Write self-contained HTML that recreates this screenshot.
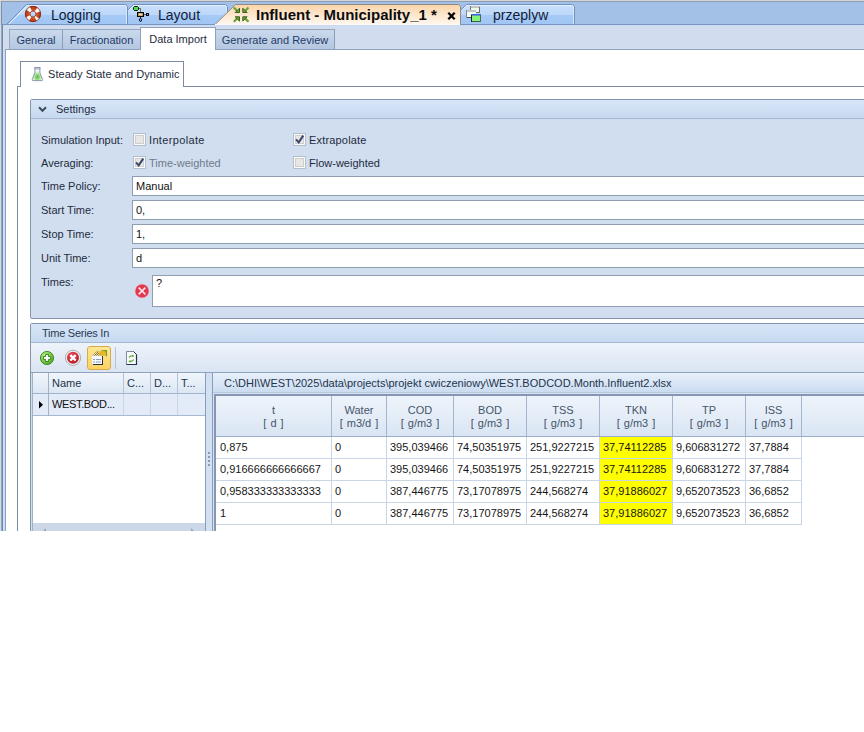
<!DOCTYPE html>
<html><head><meta charset="utf-8">
<style>
*{box-sizing:border-box;margin:0;padding:0}
html,body{width:864px;height:732px;overflow:hidden;background:#fff;font-family:"Liberation Sans",sans-serif;font-size:11px;color:#1e1e1e}
.a{position:absolute;white-space:nowrap}
#app{position:absolute;left:0;top:0;width:864px;height:531px;overflow:hidden;background:#d6e2f2}
.tt{font-size:14px;color:#101c38;top:7px;line-height:17px}
.sub{top:29px;height:20px;border-top:1px solid #95a6bd;border-right:1px solid #8b9eb8;background:linear-gradient(#cad9ec,#b4c7e0);color:#1f3a66;line-height:21px;text-align:center}
.lbl{color:#1e2c40;line-height:13px}
.inp{left:132px;width:740px;height:20px;background:#fff;border:1px solid #8e9db2;padding:0 0 0 3px;color:#111;line-height:19px}
.cb{width:13px;height:13px;border:1px solid #b3bfcf;background:#e8e7e5;box-shadow:inset 0 0 0 1px #fbfbfb,inset 0 0 0 2px #cfcfcf}
.gl{color:#4a5b70}
.gh{color:#44556a;text-align:center;line-height:14px;word-spacing:1px}
.gc{color:#161616;line-height:13px}
</style></head><body>
<div id="app">
  <!-- top document tab strip -->
  <svg class="a" style="left:0;top:0" width="864" height="25" viewBox="0 0 864 25">
    <defs>
      <linearGradient id="gb" x1="0" y1="0" x2="0" y2="1">
        <stop offset="0" stop-color="#c9e0fc"/><stop offset="0.54" stop-color="#bcd7f9"/>
        <stop offset="0.54" stop-color="#a6caf6"/><stop offset="1" stop-color="#a2c6f4"/>
      </linearGradient>
      <linearGradient id="go" x1="0" y1="0" x2="0" y2="1">
        <stop offset="0" stop-color="#fbd4a8"/><stop offset="0.5" stop-color="#fde6cc"/>
        <stop offset="1" stop-color="#fff8f0"/>
      </linearGradient>
    </defs>
    <rect x="0" y="0" width="864" height="25" fill="#a3c1e6"/>
    <rect x="0" y="0" width="864" height="1" fill="#d5d5d5"/>
    <rect x="0" y="1" width="864" height="1" fill="#8d9db4"/>
    <!-- Logging -->
    <path d="M6.5 24.5 L26.5 4.5 L125.5 4.5 L127.5 6.5 L127.5 24.5" fill="url(#gb)" stroke="#7190bf" stroke-width="1"/>
    <path d="M8 24 L27 5 L125 5" fill="none" stroke="#e2effd" stroke-width="1" transform="translate(0.5,0.5)"/>
    <rect x="126" y="6" width="1" height="18" fill="#d8ebfd"/>
    <!-- Layout -->
    <path d="M127.5 24.5 L127.5 10.5 L133.5 4.5 L225.5 4.5 L227.5 6.5 L227.5 24.5" fill="url(#gb)" stroke="#7190bf" stroke-width="1"/>
    <path d="M128.5 10.5 L133.5 5.5 L225.5 5.5" fill="none" stroke="#e2effd" stroke-width="1"/>
    <rect x="226" y="6" width="1" height="18" fill="#d8ebfd"/>
    <!-- przeplyw -->
    <path d="M460.5 24.5 L460.5 10.5 L466.5 4.5 L572.5 4.5 L574.5 6.5 L574.5 24.5" fill="url(#gb)" stroke="#7190bf" stroke-width="1"/>
    <path d="M461.5 10.5 L466.5 5.5 L572.5 5.5" fill="none" stroke="#e2effd" stroke-width="1"/>
    <rect x="573" y="6" width="1" height="18" fill="#d8ebfd"/>
    <!-- bottom line -->
    <rect x="0" y="24" width="864" height="1" fill="#7a96be"/>
    <!-- Influent active -->
    <path d="M214.5 25 L235.5 4.5 L458.5 4.5 L460.5 6.5 L460.5 25" fill="url(#go)" stroke="#8f8a84" stroke-width="1"/>
    <rect x="215" y="24" width="245" height="1" fill="#fff8f0"/>
    <rect x="0" y="0" width="1" height="25" fill="#d5d5d5"/>
    <rect x="1" y="1" width="1" height="24" fill="#7890b0"/>
    <!-- lifebuoy icon -->
    <g transform="translate(33,14)">
      <defs><radialGradient id="lb" r="0.5" cx="0.5" cy="0.5" gradientUnits="objectBoundingBox"><stop offset="0.35" stop-color="#a8300e"/><stop offset="0.7" stop-color="#e4622e"/><stop offset="1" stop-color="#a02a0c"/></radialGradient></defs>
      <circle r="5.4" fill="none" stroke="url(#lb)" stroke-width="5"/>
      <circle r="5.4" fill="none" stroke="#d8582a" stroke-width="3" opacity="0.6"/>
      <circle r="5.4" fill="none" stroke="#fff" stroke-width="5" stroke-dasharray="3.4 5.08" stroke-dashoffset="1.7" transform="rotate(45)"/>
      <circle r="7.7" fill="none" stroke="#8a2810" stroke-width="0.9" opacity="0.85"/>
      <circle r="3" fill="none" stroke="#8a2810" stroke-width="0.8" opacity="0.85"/>
    </g>
    <!-- layout icon -->
    <g>
      <path d="M138.5 8.5 H140.5 V12" fill="none" stroke="#6a6448" stroke-width="1"/>
      <path d="M134.5 6.5 H137.5 L138.5 7.5 V9.5 L137.5 10.5 H134.5 L133.5 9.5 V7.5 Z" fill="#46e046" stroke="#111" stroke-width="1"/>
      <rect x="137.6" y="12.6" width="5.8" height="3.8" fill="#fcd89a" stroke="#000" stroke-width="1.2"/>
      <rect x="144" y="14" width="2" height="1" fill="#6a6448"/>
      <rect x="146" y="13" width="3" height="3" fill="#0a0a1a"/>
      <rect x="147" y="14" width="1" height="1" fill="#9aa"/>
      <rect x="140" y="17" width="1" height="1" fill="#222"/>
      <path d="M140.5 18 L141.8 19.9 L140.5 21.8 L139.2 19.9 Z" fill="#9ab8e8" stroke="#0a0a1a" stroke-width="1"/>
    </g>
    <!-- influent icon: 4 green arrows -->
    <g id="arr">
      <path d="M233.8 7.5 L238 11.7" stroke="#6aa23a" stroke-width="2.2"/>
      <path d="M239.5 8.2 L239.5 12.5 L235.2 12.5 Z" fill="#69a83c" stroke="#3e5e1c" stroke-width="1" stroke-linejoin="miter"/>
    </g>
    <use href="#arr" transform="translate(482.3,0) scale(-1,1)"/>
    <use href="#arr" transform="translate(0,29.3) scale(1,-1)"/>
    <use href="#arr" transform="translate(482.3,29.3) scale(-1,-1)"/>
    <!-- close x -->
    <path d="M448.3 12.8 L454.7 19.2 M454.7 12.8 L448.3 19.2" stroke="#000" stroke-width="2.3"/>
    <!-- przeplyw icon -->
    <g>
      <rect x="470" y="6" width="10" height="7" fill="#eefcee"/>
      <rect x="470" y="6" width="10" height="2" fill="#c4c4c4"/>
      <rect x="470" y="6" width="1" height="7" fill="#7a7a7a"/><rect x="479" y="7" width="1" height="6" fill="#6a6a6a"/><rect x="471" y="12" width="9" height="1" fill="#6a6a6a"/>
      <rect x="466" y="10" width="10" height="8" fill="#f2fff2"/>
      <rect x="466" y="10" width="10" height="2" fill="#c4c4c4"/>
      <rect x="466" y="10" width="1" height="8" fill="#8a8a8a"/><rect x="467" y="17" width="5" height="1" fill="#4a4a4a"/>
      <rect x="471" y="14" width="10" height="8" fill="#82f47a"/>
      <rect x="471" y="14" width="10" height="1.6" fill="#3d6ad8"/>
      <rect x="471" y="15" width="1" height="7" fill="#1a2a3a"/><rect x="472" y="21" width="9" height="1" fill="#4a5a4a"/><rect x="480" y="15" width="1" height="7" fill="#5a6a5a"/>
    </g>
  </svg>
  <div class="a tt" style="left:51px">Logging</div>
  <div class="a tt" style="left:158px">Layout</div>
  <div class="a tt" style="left:256px;top:6px;font-size:15px;font-weight:bold;color:#0c0c0c">Influent - Municipality_1 *</div>
  <div class="a tt" style="left:493px">przeplyw</div>

  <!-- frame below strip -->
  <div class="a" style="left:0;top:25px;width:1px;height:506px;background:#d0dcea"></div>
  <div class="a" style="left:1px;top:25px;width:1px;height:506px;background:#95a7bf"></div>
  <div class="a" style="left:2px;top:25px;width:1px;height:506px;background:#7189aa"></div>
  <div class="a" style="left:3px;top:25px;width:861px;height:506px;background:#d1ddee"></div>
  <div class="a" style="left:3px;top:25px;width:861px;height:1px;background:#c9dcf5"></div>
  <div class="a" style="left:3px;top:50px;width:2px;height:481px;background:#c9defa"></div>
  <!-- sub tab strip -->
  <div class="a" style="left:5px;top:49px;width:859px;height:1px;background:#8ea2bd"></div>
  <div class="a sub" style="left:9px;width:54px;border-left:1px solid #95a6bd">General</div>
  <div class="a sub" style="left:63px;width:78px">Fractionation</div>
  <div class="a sub" style="left:216px;width:119px">Generate and Review</div>
  <div class="a" style="left:140px;top:27px;width:76px;height:24px;background:#fff;border:1px solid #8ea2bd;border-bottom:none;color:#1e2c40;line-height:16px;padding-top:3px;text-align:center">Data Import</div>

  <!-- content white area -->
  <div class="a" style="left:5px;top:50px;width:859px;height:481px;background:#fff;border-left:1px solid #8ea2bd"></div>

  <!-- inner tab -->
  <div class="a" style="left:17px;top:86px;width:847px;height:445px;border-left:1px solid #7d8ba3;border-top:1px solid #7d8ba3"></div>
  <div class="a" style="left:20px;top:61px;width:164px;height:26px;background:#fff;border:1px solid #7d8ba3;border-bottom:none"></div>
  <svg class="a" style="left:31px;top:66px" width="14" height="17" viewBox="0 0 14 17">
    <defs><radialGradient id="fl" cx="0.5" cy="0.72" r="0.5"><stop offset="0" stop-color="#52b840"/><stop offset="0.55" stop-color="#b4e4a0"/><stop offset="1" stop-color="#eef8ee"/></radialGradient></defs>
    <g transform="translate(-0.6,0)">
    <path d="M4.5 1.5 L9.5 1.5 L9.5 6.5 L12.2 13.6 Q12.5 14.6 11.5 14.6 L2.5 14.6 Q1.5 14.6 1.8 13.6 L4.5 6.5 Z" fill="url(#fl)" stroke="#7f8fa6" stroke-width="0.9"/>
    <path d="M5.4 2.6 L8.6 2.6 L8.6 6.5 L5.4 6.5 Z" fill="#eef4fa" opacity="0.7"/>
    <rect x="4.5" y="1.5" width="5" height="1.4" fill="#fff" stroke="#7f8fa6" stroke-width="0.8"/>
    </g>
  </svg>
  <div class="a" style="left:48px;top:68px;color:#1e2c40;line-height:13px;letter-spacing:0.05px">Steady State and Dynamic</div>

  <!-- Settings group -->
  <div class="a" style="left:30px;top:99px;width:850px;height:220px;background:#d1deef;border:1px solid #8596ae;border-radius:2px"></div>
  <div class="a" style="left:31px;top:100px;width:849px;height:18px;background:linear-gradient(#d8e6f8,#c6d9f0)"></div>
  <div class="a" style="left:31px;top:118px;width:849px;height:1px;background:#a6b8d0"></div>
  <svg class="a" style="left:38px;top:106px" width="9" height="7" viewBox="0 0 9 7"><path d="M1 1.3 L4.5 4.8 L8 1.3" fill="none" stroke="#3e4c60" stroke-width="2"/></svg>
  <div class="a lbl" style="left:56px;top:103px">Settings</div>

  <div class="a lbl" style="left:41px;top:134px">Simulation Input:</div>
  <div class="a cb" style="left:133px;top:133px"></div>
  <div class="a lbl" style="left:149px;top:134px;letter-spacing:0.35px">Interpolate</div>
  <div class="a cb" style="left:293px;top:133px"></div>
  <svg class="a" style="left:293px;top:133px" width="13" height="13"><path d="M3 6.3 L5.7 9.3 L10.2 2.6" fill="none" stroke="#36476a" stroke-width="2"/></svg>
  <div class="a lbl" style="left:309px;top:134px;letter-spacing:0.18px">Extrapolate</div>

  <div class="a lbl" style="left:41px;top:157px">Averaging:</div>
  <div class="a cb" style="left:133px;top:156px"></div>
  <svg class="a" style="left:133px;top:156px" width="13" height="13"><path d="M3 6.3 L5.7 9.3 L10.2 2.6" fill="none" stroke="#36476a" stroke-width="2"/></svg>
  <div class="a lbl" style="left:149px;top:157px;color:#6e7a8a">Time-weighted</div>
  <div class="a cb" style="left:293px;top:156px"></div>
  <div class="a lbl" style="left:309px;top:157px">Flow-weighted</div>

  <div class="a lbl" style="left:41px;top:180px">Time Policy:</div>
  <div class="a inp" style="top:176px">Manual</div>
  <div class="a lbl" style="left:41px;top:204px">Start Time:</div>
  <div class="a inp" style="top:200px">0,</div>
  <div class="a lbl" style="left:41px;top:228px">Stop Time:</div>
  <div class="a inp" style="top:224px">1,</div>
  <div class="a lbl" style="left:41px;top:252px">Unit Time:</div>
  <div class="a inp" style="top:248px">d</div>
  <div class="a lbl" style="left:41px;top:276px">Times:</div>
  <svg class="a" style="left:134px;top:283px" width="16" height="16" viewBox="0 0 16 16"><circle cx="8" cy="8" r="7.2" fill="#f2a8b8"/><circle cx="8" cy="8" r="6.6" fill="#e03a50"/><path d="M4.6 4.6 L11.4 11.4 M11.4 4.6 L4.6 11.4" stroke="#ffe4ec" stroke-width="1.5"/></svg>
  <div class="a inp" style="left:152px;top:275px;height:32px;padding-left:3px;line-height:15px">?</div>

  <!-- Time Series In group -->
  <div class="a" style="left:30px;top:323px;width:850px;height:220px;background:#d1deef;border:1px solid #8596ae;border-radius:2px"></div>
  <div class="a" style="left:31px;top:324px;width:849px;height:18px;background:linear-gradient(#d8e6f8,#c6d9f0)"></div>
  <div class="a" style="left:31px;top:342px;width:849px;height:1px;background:#a6b8d0"></div>
  <div class="a lbl" style="left:42px;top:327px;color:#2a3a52;letter-spacing:-0.25px">Time Series In</div>

  <!-- toolbar -->
  <div class="a" style="left:31px;top:343px;width:849px;height:29px;background:linear-gradient(#eef3fa,#d9e4f2)"></div>
  <div class="a" style="left:31px;top:372px;width:849px;height:1px;background:#8fa3bd"></div>
  <svg class="a" style="left:38px;top:349px" width="18" height="18" viewBox="0 0 18 18">
    <defs><radialGradient id="gg" cx="0.35" cy="0.3" r="0.8"><stop offset="0" stop-color="#b4f088"/><stop offset="1" stop-color="#48a81e"/></radialGradient>
    <radialGradient id="rg" cx="0.4" cy="0.3" r="0.8"><stop offset="0" stop-color="#e8505a"/><stop offset="1" stop-color="#b0141c"/></radialGradient></defs>
    <circle cx="9" cy="9" r="6.6" fill="url(#gg)" stroke="#3a8418" stroke-width="0.9"/>
    <path d="M7.6 5.4 H10.4 V7.6 H12.6 V10.4 H10.4 V12.6 H7.6 V10.4 H5.4 V7.6 H7.6 Z" fill="#fff" stroke="#2f7a12" stroke-width="0.9"/>
  </svg>
  <svg class="a" style="left:64px;top:349px" width="18" height="18" viewBox="0 0 18 18">
    <circle cx="9" cy="8.8" r="7.6" fill="#f4f4f4" stroke="#9a9a9a" stroke-width="0.8"/>
    <circle cx="9" cy="8.8" r="6" fill="url(#rg)"/>
    <path d="M6.3 6.1 L11.7 11.5 M11.7 6.1 L6.3 11.5" stroke="#fff" stroke-width="2.3"/>
  </svg>
  <div class="a" style="left:87px;top:346px;width:24px;height:24px;background:linear-gradient(#fde796,#fbd362);border:1px solid #d9aa4c;border-radius:3px"></div>
  <svg class="a" style="left:88px;top:347px" width="22" height="22" viewBox="0 0 22 22">
    <defs><pattern id="ck" width="2" height="2" patternUnits="userSpaceOnUse"><rect width="2" height="2" fill="#f4e4b0"/><rect width="1" height="1" fill="#8a6a20"/><rect x="1" y="1" width="1" height="1" fill="#8a6a20"/></pattern></defs>
    <rect x="5" y="9" width="10" height="9" fill="#2e3444"/>
    <rect x="4" y="8" width="10" height="9" fill="#f6f8fc"/>
    <rect x="4" y="8" width="10" height="0.8" fill="#b8c0cc"/>
    <rect x="5" y="12" width="2" height="1" fill="#8aa0c8"/><rect x="8" y="12" width="5" height="1" fill="#8aa0c8"/>
    <rect x="5" y="14.5" width="2" height="1" fill="#8aa0c8"/><rect x="8" y="14.5" width="5" height="1" fill="#8aa0c8"/>
    <path d="M4.5 8.5 L9.5 3.5 L13.5 7.5 L13.5 8.5 Z" fill="url(#ck)"/>
    <path d="M13 3 L19 3 L19 10 Z" fill="#6e9e3a"/>
    <ellipse cx="14.5" cy="6.2" rx="3.6" ry="2.6" fill="#e8b62c"/>
  </svg>
  <div class="a" style="left:115px;top:347px;width:1px;height:22px;background:#b6c3d4"></div>
  <svg class="a" style="left:125px;top:350px" width="14" height="16" viewBox="0 0 14 16">
    <path d="M1.5 1.5 L8.5 1.5 L11.5 4.5 L11.5 14.5 L1.5 14.5 Z" fill="#f8fafc" stroke="#7d8aa0" stroke-width="1"/>
    <path d="M11.5 4.5 L11.5 14.5 L1.5 14.5" fill="none" stroke="#26324c" stroke-width="1.2"/>
    <path d="M8.5 1.5 L11.5 4.5" fill="none" stroke="#26324c" stroke-width="1"/>
    <path d="M4 7.6 Q5 5.4 8 5.8 M8.6 9.4 Q7.6 11.8 4.6 11.4" fill="none" stroke="#5aa82a" stroke-width="1.2"/>
    <path d="M7.2 4.4 L9.2 5.9 L7.2 7.2 Z M5.4 10.1 L3.4 11.4 L5.4 12.8 Z" fill="#5aa82a"/>
  </svg>

  
  <!-- left grid -->
  <div class="a" style="left:32px;top:373px;width:174px;height:160px;background:#fff;border-left:1px solid #9fb2ca;border-right:1px solid #8a9db8"></div>
  <div class="a" style="left:33px;top:373px;width:172px;height:21px;background:linear-gradient(#f0f5fb,#dce7f4);border-bottom:1px solid #a2b4cc"></div>
  <div class="a" style="left:33px;top:394px;width:172px;height:22px;background:#e2ebf7;border-bottom:1px solid #a8b9cf"></div>
  <div class="a" style="left:48px;top:373px;width:1px;height:43px;background:#9fb2ca"></div>
  <div class="a" style="left:123px;top:373px;width:1px;height:20px;background:#b4c4d8"></div>
  <div class="a" style="left:150px;top:373px;width:1px;height:20px;background:#b4c4d8"></div>
  <div class="a" style="left:177px;top:373px;width:1px;height:20px;background:#b4c4d8"></div>
  <div class="a" style="left:123px;top:394px;width:1px;height:21px;background:#c8d6e6"></div>
  <div class="a" style="left:150px;top:394px;width:1px;height:21px;background:#c8d6e6"></div>
  <div class="a" style="left:177px;top:394px;width:1px;height:21px;background:#c8d6e6"></div>
  <div class="a gl" style="left:52px;top:377px;color:#23344c">Name</div>
  <div class="a gl" style="left:127px;top:377px;color:#23344c">C...</div>
  <div class="a gl" style="left:154px;top:377px;color:#23344c">D...</div>
  <div class="a gl" style="left:181px;top:377px;color:#23344c">T...</div>
  <svg class="a" style="left:38px;top:401px" width="6" height="9"><path d="M1 0 L5 3.8 L1 7.6 Z" fill="#000"/></svg>
  <div class="a" style="left:52px;top:398px;color:#111;letter-spacing:-0.35px">WEST.BOD...</div>
  <div class="a" style="left:33px;top:523px;width:172px;height:9px;background:#ccd8e8"></div>
  <svg class="a" style="left:42px;top:527px" width="6" height="4"><path d="M1 4 L4 1 L4 4 Z" fill="#9aa8ba"/></svg>
  <svg class="a" style="left:190px;top:527px" width="6" height="4"><path d="M1 1 L4 4 L1 4 Z" fill="#9aa8ba"/></svg>

  <!-- splitter -->
  <div class="a" style="left:206px;top:373px;width:6px;height:160px;background:#d3e0f1"></div>
  <div class="a" style="left:208px;top:452px;width:2px;height:2px;background:#8a9bb2"></div>
  <div class="a" style="left:208px;top:456px;width:2px;height:2px;background:#8a9bb2"></div>
  <div class="a" style="left:208px;top:460px;width:2px;height:2px;background:#8a9bb2"></div>
  <div class="a" style="left:208px;top:464px;width:2px;height:2px;background:#8a9bb2"></div>

  <!-- right panel -->
  <div class="a" style="left:212px;top:373px;width:668px;height:160px;background:#d5e3f4;border-left:1px solid #8a9db8"></div>
  <div class="a" style="left:213px;top:373px;width:667px;height:20px;background:linear-gradient(#e8f0fa,#cadbf0)"></div>
  <div class="a" style="left:213px;top:392px;width:667px;height:1px;background:#b8c9de"></div>
  <div class="a" style="left:224px;top:377px;color:#23344c">C:\DHI\WEST\2025\data\projects\projekt cwiczeniowy\WEST.BODCOD.Month.Influent2.xlsx</div>
  <div class="a" style="left:214px;top:394px;width:666px;height:140px;background:#fff;border-left:2px solid #8597b2;border-top:2px solid #8597b2"></div>
  <!-- GRID -->
<div class="a" style="left:216px;top:396px;width:664px;height:40px;background:linear-gradient(#eff4fb,#d9e5f3)"></div>
<div class="a" style="left:216px;top:436px;width:664px;height:1px;background:#99adc6"></div>
<div class="a gh" style="left:216px;top:403px;width:115px">t</div><div class="a gh" style="left:216px;top:416px;width:115px">[ d ]</div>
<div class="a" style="left:331px;top:396px;width:1px;height:40px;background:#a4b6cd"></div>
<div class="a" style="left:331px;top:437px;width:1px;height:88px;background:#c9d6e6"></div>
<div class="a gh" style="left:332px;top:403px;width:54px">Water</div><div class="a gh" style="left:332px;top:416px;width:54px">[ m3/d ]</div>
<div class="a" style="left:386px;top:396px;width:1px;height:40px;background:#a4b6cd"></div>
<div class="a" style="left:386px;top:437px;width:1px;height:88px;background:#c9d6e6"></div>
<div class="a gh" style="left:387px;top:403px;width:66px">COD</div><div class="a gh" style="left:387px;top:416px;width:66px">[ g/m3 ]</div>
<div class="a" style="left:453px;top:396px;width:1px;height:40px;background:#a4b6cd"></div>
<div class="a" style="left:453px;top:437px;width:1px;height:88px;background:#c9d6e6"></div>
<div class="a gh" style="left:454px;top:403px;width:72px">BOD</div><div class="a gh" style="left:454px;top:416px;width:72px">[ g/m3 ]</div>
<div class="a" style="left:526px;top:396px;width:1px;height:40px;background:#a4b6cd"></div>
<div class="a" style="left:526px;top:437px;width:1px;height:88px;background:#c9d6e6"></div>
<div class="a gh" style="left:527px;top:403px;width:72px">TSS</div><div class="a gh" style="left:527px;top:416px;width:72px">[ g/m3 ]</div>
<div class="a" style="left:599px;top:396px;width:1px;height:40px;background:#a4b6cd"></div>
<div class="a" style="left:599px;top:437px;width:1px;height:88px;background:#c9d6e6"></div>
<div class="a gh" style="left:600px;top:403px;width:72px">TKN</div><div class="a gh" style="left:600px;top:416px;width:72px">[ g/m3 ]</div>
<div class="a" style="left:672px;top:396px;width:1px;height:40px;background:#a4b6cd"></div>
<div class="a" style="left:672px;top:437px;width:1px;height:88px;background:#c9d6e6"></div>
<div class="a gh" style="left:673px;top:403px;width:72px">TP</div><div class="a gh" style="left:673px;top:416px;width:72px">[ g/m3 ]</div>
<div class="a" style="left:745px;top:396px;width:1px;height:40px;background:#a4b6cd"></div>
<div class="a" style="left:745px;top:437px;width:1px;height:88px;background:#c9d6e6"></div>
<div class="a gh" style="left:746px;top:403px;width:55px">ISS</div><div class="a gh" style="left:746px;top:416px;width:55px">[ g/m3 ]</div>
<div class="a" style="left:801px;top:396px;width:1px;height:40px;background:#a4b6cd"></div>
<div class="a" style="left:801px;top:437px;width:1px;height:88px;background:#c9d6e6"></div>
<div class="a" style="left:216px;top:458px;width:585px;height:1px;background:#c9d6e6"></div>
<div class="a" style="left:600px;top:437px;width:72px;height:21px;background:#ffff00"></div>
<div class="a gc" style="left:220px;top:441px">0,875</div>
<div class="a gc" style="left:335px;top:441px">0</div>
<div class="a gc" style="left:390px;top:441px">395,039466</div>
<div class="a gc" style="left:457px;top:441px">74,50351975</div>
<div class="a gc" style="left:530px;top:441px">251,9227215</div>
<div class="a gc" style="left:603px;top:441px">37,74112285</div>
<div class="a gc" style="left:676px;top:441px">9,606831272</div>
<div class="a gc" style="left:749px;top:441px">37,7884</div>
<div class="a" style="left:216px;top:480px;width:585px;height:1px;background:#c9d6e6"></div>
<div class="a" style="left:600px;top:459px;width:72px;height:21px;background:#ffff00"></div>
<div class="a gc" style="left:220px;top:463px">0,916666666666667</div>
<div class="a gc" style="left:335px;top:463px">0</div>
<div class="a gc" style="left:390px;top:463px">395,039466</div>
<div class="a gc" style="left:457px;top:463px">74,50351975</div>
<div class="a gc" style="left:530px;top:463px">251,9227215</div>
<div class="a gc" style="left:603px;top:463px">37,74112285</div>
<div class="a gc" style="left:676px;top:463px">9,606831272</div>
<div class="a gc" style="left:749px;top:463px">37,7884</div>
<div class="a" style="left:216px;top:502px;width:585px;height:1px;background:#c9d6e6"></div>
<div class="a" style="left:600px;top:481px;width:72px;height:21px;background:#ffff00"></div>
<div class="a gc" style="left:220px;top:485px">0,958333333333333</div>
<div class="a gc" style="left:335px;top:485px">0</div>
<div class="a gc" style="left:390px;top:485px">387,446775</div>
<div class="a gc" style="left:457px;top:485px">73,17078975</div>
<div class="a gc" style="left:530px;top:485px">244,568274</div>
<div class="a gc" style="left:603px;top:485px">37,91886027</div>
<div class="a gc" style="left:676px;top:485px">9,652073523</div>
<div class="a gc" style="left:749px;top:485px">36,6852</div>
<div class="a" style="left:216px;top:524px;width:585px;height:1px;background:#c9d6e6"></div>
<div class="a" style="left:600px;top:503px;width:72px;height:21px;background:#ffff00"></div>
<div class="a gc" style="left:220px;top:507px">1</div>
<div class="a gc" style="left:335px;top:507px">0</div>
<div class="a gc" style="left:390px;top:507px">387,446775</div>
<div class="a gc" style="left:457px;top:507px">73,17078975</div>
<div class="a gc" style="left:530px;top:507px">244,568274</div>
<div class="a gc" style="left:603px;top:507px">37,91886027</div>
<div class="a gc" style="left:676px;top:507px">9,652073523</div>
<div class="a gc" style="left:749px;top:507px">36,6852</div>

<!-- /GRID -->
</div>
</body></html>
